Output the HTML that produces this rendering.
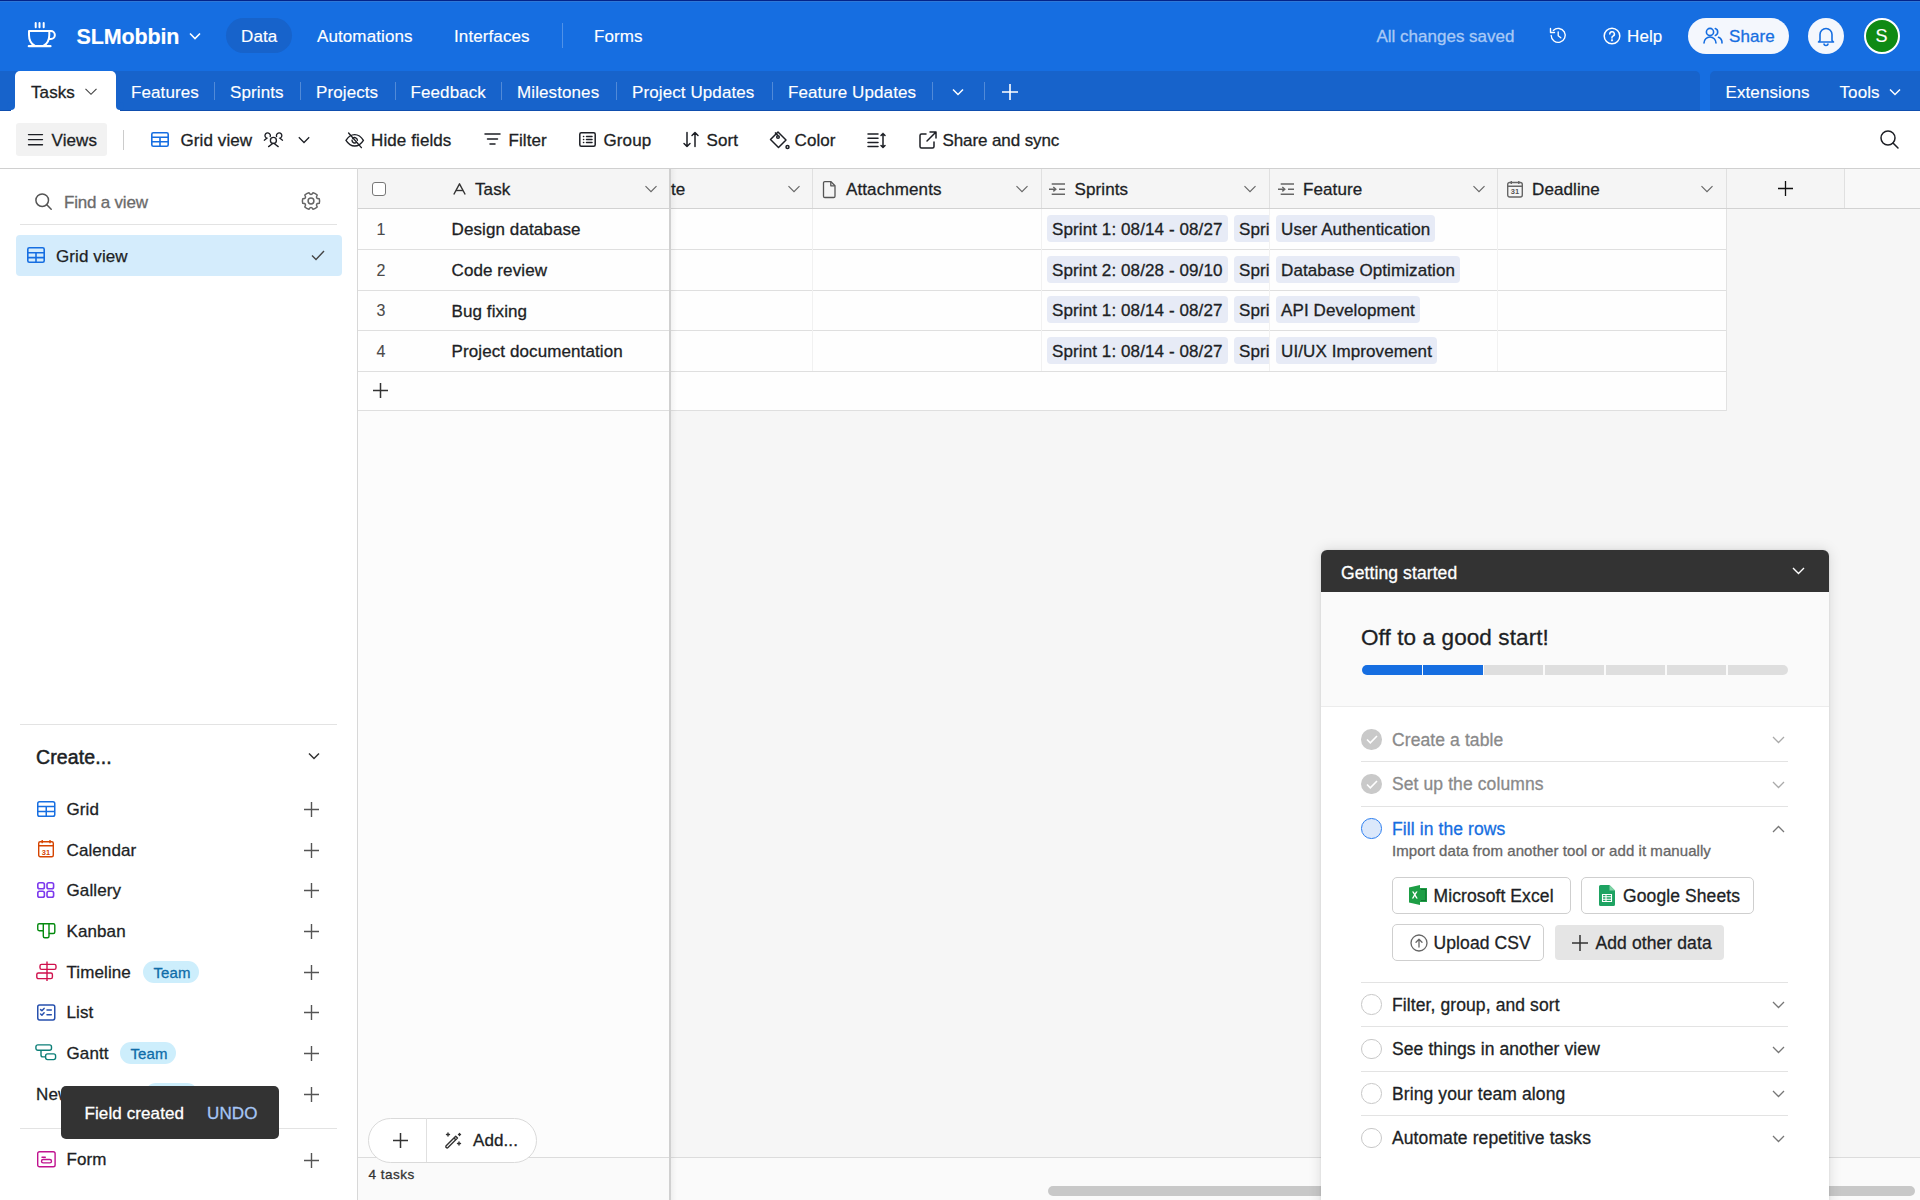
<!DOCTYPE html>
<html><head><meta charset="utf-8">
<style>
*{box-sizing:border-box;margin:0;padding:0}
html,body{width:1920px;height:1200px;overflow:hidden;background:#fff;font-family:"Liberation Sans",sans-serif;color:#1d1f25}
.a{position:absolute}
.t{position:absolute;white-space:nowrap;line-height:1;letter-spacing:.1px;-webkit-text-stroke:.3px currentColor}
svg{position:absolute;overflow:visible}
#top{left:0;top:0;width:1920px;height:111px;background:#166ee1}
#tabs{left:0;top:70.5px;width:1700px;height:40.5px;background:#1763cb;border-top-right-radius:5px;border-bottom:1px solid #0f4eae}
#tabs2{left:1709.5px;top:70.5px;width:210.5px;height:40.5px;background:#1763cb;border-top-left-radius:5px;border-bottom:1px solid #0f4eae}
.w{color:#fff;-webkit-text-stroke:.15px #fff}
.sep{position:absolute;width:1px;background:rgba(255,255,255,.25)}
</style></head><body>
<!-- TOP BAR -->
<div id="top" class="a"></div>
<div class="a" style="left:0;top:0;width:1920px;height:1px;background:#03248a"></div><div class="a" style="left:0;top:1px;width:1920px;height:1px;background:#2f78d6"></div>
<!-- logo cup -->
<svg style="left:26px;top:20px" width="32" height="30" viewBox="0 0 32 30" fill="none" stroke="#fff" stroke-width="2" stroke-linecap="round" stroke-linejoin="round">
 <path d="M9.7 3v4.2M13.5 3v4.2M17.7 3v4.2"/>
 <path d="M3 10.9H24.5M3 10.9V15C3 20.5 5.5 24.2 9 26M23.3 10.9V15C23.3 20.5 20.8 24.2 17.3 26"/>
 <path d="M23.5 10.9h1.3a4.05 4.05 0 0 1 0 8.1h-1.6"/>
 <path d="M2.8 26.2H24.5" stroke-width="2.2"/>
</svg>
<div class="t w" style="left:76.5px;top:26.5px;font-size:21.5px;font-weight:bold;letter-spacing:-.15px">SLMobbin</div>
<svg style="left:189px;top:32px" width="12" height="8" viewBox="0 0 12 8" fill="none" stroke="#fff" stroke-width="1.6"><path d="M1 1.5l5 5 5-5"/></svg>
<div class="a" style="left:225.5px;top:18px;width:66px;height:35px;border-radius:18px;background:#1763cb"></div>
<div class="t w" style="left:241px;top:27.5px;font-size:17px">Data</div>
<div class="t w" style="left:317px;top:27.5px;font-size:17px">Automations</div>
<div class="t w" style="left:454px;top:27.5px;font-size:17px">Interfaces</div>
<div class="sep" style="left:562px;top:23px;height:25px"></div>
<div class="t w" style="left:594px;top:27.5px;font-size:17px">Forms</div>
<div class="t" style="left:1376.5px;top:27.5px;font-size:17px;color:#a9c9f6;letter-spacing:0">All changes saved</div>


<!-- right of top bar -->
<svg style="left:1549px;top:27px" width="18" height="17" viewBox="0 0 18 17" fill="none" stroke="#fff" stroke-width="1.35" stroke-linecap="round" stroke-linejoin="round">
 <path d="M2.2 8.5A7 7 0 1 0 4.3 3.4"/><path d="M1.5 1.5v4h4"/><path d="M9.2 4.8v4l2.6 2"/>
</svg>
<svg style="left:1602.5px;top:27px" width="18" height="18" viewBox="0 0 18 18" fill="none" stroke="#fff" stroke-width="1.5" stroke-linecap="round">
 <circle cx="9" cy="9" r="7.8"/><path d="M6.8 7a2.3 2.3 0 1 1 3.2 2.1c-.7.3-1 .8-1 1.5v.4"/><circle cx="9" cy="13.3" r=".4" fill="#fff"/>
</svg>
<div class="t w" style="left:1627px;top:27.5px;font-size:17px">Help</div>
<div class="a" style="left:1687.5px;top:18px;width:101px;height:35.5px;border-radius:18px;background:#f4f7fd"></div>
<svg style="left:1703px;top:27px" width="20" height="17" viewBox="0 0 20 17" fill="none" stroke="#166ee1" stroke-width="1.6" stroke-linecap="round">
 <circle cx="7" cy="5" r="3.6"/><path d="M1 16a6 6 0 0 1 12 0"/><path d="M12.3 1.6a3.6 3.6 0 0 1 0 6.8"/><path d="M15.5 10.3A6 6 0 0 1 19 16"/>
</svg>
<div class="t" style="left:1729px;top:27.5px;font-size:17px;color:#166ee1">Share</div>
<div class="a" style="left:1808px;top:18px;width:36px;height:36px;border-radius:50%;background:#f4f7fd"></div>
<svg style="left:1817px;top:26px" width="18" height="20" viewBox="0 0 18 20" fill="none" stroke="#166ee1" stroke-width="1.6" stroke-linejoin="round">
 <path d="M3 14.5V8.5a6 6 0 0 1 12 0v6l1.5 1.5h-15z"/><path d="M7 17.5a2 2 0 0 0 4 0"/>
</svg>
<div class="a" style="left:1864px;top:17.5px;width:36px;height:36px;border-radius:50%;background:#0f8a14;border:2px solid #fff"></div>
<div class="t w" style="left:1875.5px;top:27px;font-size:18px">S</div>

<!-- TAB BAR -->
<div id="tabs" class="a"></div>
<div id="tabs2" class="a"></div>
<div class="a" style="left:11px;top:106px;width:5px;height:5px;background:#fff"></div><div class="a" style="left:7px;top:102px;width:8px;height:8px;border-radius:50%;background:#1763cb"></div><div class="a" style="left:115px;top:106px;width:5px;height:5px;background:#fff"></div><div class="a" style="left:116px;top:102px;width:8px;height:8px;border-radius:50%;background:#1763cb"></div>
<div class="a" style="left:15px;top:71px;width:101px;height:41px;background:#fff;border-radius:5px 5px 0 0"></div>
<div class="t" style="left:31px;top:83.5px;font-size:17px;color:#1d1f25">Tasks</div>
<svg style="left:84.5px;top:88px" width="12" height="7" viewBox="0 0 12 7" fill="none" stroke="#444" stroke-width="1.15"><path d="M.5 .8l5.5 5.5 5.5-5.5"/></svg>
<div class="t w" style="left:131px;top:83.5px;font-size:17px">Features</div>
<div class="sep" style="left:213.5px;top:82px;height:18px"></div>
<div class="t w" style="left:230px;top:83.5px;font-size:17px">Sprints</div>
<div class="sep" style="left:299.5px;top:82px;height:18px"></div>
<div class="t w" style="left:316px;top:83.5px;font-size:17px">Projects</div>
<div class="sep" style="left:394.5px;top:82px;height:18px"></div>
<div class="t w" style="left:410.5px;top:83.5px;font-size:17px">Feedback</div>
<div class="sep" style="left:501px;top:82px;height:18px"></div>
<div class="t w" style="left:517px;top:83.5px;font-size:17px">Milestones</div>
<div class="sep" style="left:616px;top:82px;height:18px"></div>
<div class="t w" style="left:632px;top:83.5px;font-size:17px">Project Updates</div>
<div class="sep" style="left:771.5px;top:82px;height:18px"></div>
<div class="t w" style="left:788px;top:83.5px;font-size:17px">Feature Updates</div>
<div class="sep" style="left:932px;top:82px;height:18px"></div>
<svg style="left:951.5px;top:88px" width="12" height="8" viewBox="0 0 12 8" fill="none" stroke="#fff" stroke-width="1.5"><path d="M1 1.5l5 5 5-5"/></svg>
<div class="sep" style="left:983.5px;top:82px;height:18px"></div>
<svg style="left:1001.5px;top:83.5px" width="16" height="16" viewBox="0 0 16 16" fill="none" stroke="#fff" stroke-width="1.6"><path d="M8 0v16M0 8h16"/></svg>
<div class="t w" style="left:1725.5px;top:83.5px;font-size:17px">Extensions</div>
<div class="t w" style="left:1839.5px;top:83.5px;font-size:17px">Tools</div>
<svg style="left:1889px;top:88px" width="12" height="8" viewBox="0 0 12 8" fill="none" stroke="#fff" stroke-width="1.5"><path d="M1 1.5l5 5 5-5"/></svg>

<!-- TOOLBAR -->
<div class="a" style="left:16px;top:123px;width:91px;height:33px;border-radius:3px;background:#f2f2f2"></div>
<svg style="left:28px;top:133px" width="15" height="13" viewBox="0 0 15 13" fill="none" stroke="#1d1f25" stroke-width="1.35" stroke-linecap="round"><path d="M.5 1.6h14M.5 6.6h14M.5 11.75h14"/></svg>
<div class="t" style="left:51.5px;top:131.5px;font-size:17px">Views</div>
<div class="a" style="left:123px;top:130px;width:1px;height:20px;background:#ccc"></div>
<svg style="left:150.5px;top:132px" width="18" height="15" viewBox="0 0 18 15" fill="none" stroke="#166ee1" stroke-width="1.6"><rect x=".8" y=".8" width="16.4" height="13.4" rx="1.5"/><path d="M1 5.3h16M1 9.8h16M9 5.3v9"/></svg>
<div class="t" style="left:180.5px;top:131.5px;font-size:17px">Grid view</div>
<svg style="left:263px;top:131px" width="22" height="18" viewBox="0 0 22 18" fill="none" stroke="#1d1f25" stroke-width="1.35" stroke-linecap="round"><circle cx="10.4" cy="9.4" r="3"/><path d="M5.6 15.6L9 13a2.2 2.2 0 0 1 2.8 0l3.4 2.6"/><path d="M7.2 5.6A2.7 2.7 0 1 0 3.8 7.2L1.3 9.2"/><path d="M13.6 5.6A2.7 2.7 0 1 1 17 7.2l2.5 2"/></svg>
<svg style="left:298px;top:136px" width="12" height="8" viewBox="0 0 12 8" fill="none" stroke="#1d1f25" stroke-width="1.25"><path d="M.8 1.3l5.2 5.2 5.2-5.2"/></svg>
<svg style="left:345px;top:131.5px" width="20" height="17" viewBox="0 0 20 17" fill="none" stroke="#1d1f25" stroke-width="1.4" stroke-linecap="round"><path d="M1 8.3C3.5 4.3 6.5 2.6 9.7 2.6s6.2 1.7 8.7 5.7c-2.5 4-5.5 5.7-8.7 5.7S3.5 12.3 1 8.3z"/><path d="M12.4 8.3a2.7 2.7 0 0 0-4.6-1.9M7 8.3a2.7 2.7 0 0 0 4.6 1.9"/><path d="M3.6 1l12.8 14.6"/></svg>
<div class="t" style="left:371px;top:131.5px;font-size:17px">Hide fields</div>
<svg style="left:484px;top:132px" width="17" height="15" viewBox="0 0 17 15" fill="none" stroke="#1d1f25" stroke-width="1.5" stroke-linecap="round"><path d="M1 2h15M3.5 7h10M6 12h5"/></svg>
<div class="t" style="left:508.5px;top:131.5px;font-size:17px">Filter</div>
<svg style="left:579px;top:132px" width="17" height="15" viewBox="0 0 17 15" fill="none" stroke="#1d1f25" stroke-width="1.5" stroke-linecap="round"><rect x=".8" y=".8" width="15.4" height="13.4" rx="1.5"/><path d="M4.5 4.5h.2M4.5 7.5h.2M4.5 10.5h.2M7.5 4.5h5.5M7.5 7.5h5.5M7.5 10.5h5.5"/></svg>
<div class="t" style="left:603.5px;top:131.5px;font-size:17px">Group</div>
<svg style="left:683px;top:131px" width="16" height="17" viewBox="0 0 16 17" fill="none" stroke="#1d1f25" stroke-width="1.5" stroke-linecap="round" stroke-linejoin="round"><path d="M4 1.5v14M1 12.5l3 3 3-3M12 15.5v-14M9 4.5l3-3 3 3"/></svg>
<div class="t" style="left:706.5px;top:131.5px;font-size:17px">Sort</div>
<svg style="left:769px;top:130.5px" width="21" height="19" viewBox="0 0 21 19" fill="none" stroke="#1d1f25" stroke-width="1.5" stroke-linejoin="round"><path d="M1.5 8.5L9 1l8 8-7.5 7.5z"/><path d="M6 1.5l3 3"/><circle cx="9" cy="6" r="1.3"/><circle cx="18.5" cy="16" r="1.5"/></svg>
<div class="t" style="left:794.5px;top:131.5px;font-size:17px">Color</div>
<svg style="left:867px;top:131.5px" width="19" height="17" viewBox="0 0 19 17" fill="none" stroke="#1d1f25" stroke-width="1.5" stroke-linecap="round"><path d="M1 2h10M1 6.2h10M1 10.4h10M1 14.6h10"/><path d="M16 1.5v14M14 3.5l2-2 2 2M14 13.5l2 2 2-2"/></svg>
<svg style="left:918.5px;top:131px" width="18" height="18" viewBox="0 0 18 18" fill="none" stroke="#1d1f25" stroke-width="1.5" stroke-linecap="round" stroke-linejoin="round"><path d="M7 3H2.5A1.5 1.5 0 0 0 1 4.5v11A1.5 1.5 0 0 0 2.5 17h11a1.5 1.5 0 0 0 1.5-1.5V11"/><path d="M11 1h6v6M17 1L8 10"/></svg>
<div class="t" style="left:942.5px;top:131.5px;font-size:17px;letter-spacing:-.1px">Share and sync</div>
<svg style="left:1880px;top:130px" width="19" height="19" viewBox="0 0 19 19" fill="none" stroke="#1d1f25" stroke-width="1.5" stroke-linecap="round"><circle cx="8" cy="8" r="7"/><path d="M13 13l5 5"/></svg>



<!-- GRID -->
<div class="a" style="left:358px;top:168px;width:1562px;height:1032px;background:#f6f6f6"></div>
<div class="a" style="left:358px;top:168px;width:312px;height:990px;background:#fcfcfc"></div>
<div class="a" style="left:0;top:168px;width:1920px;height:1px;background:#d0d0d0"></div>
<div class="a" style="left:358px;top:169px;width:1486px;height:39px;background:#f5f5f5"></div>
<div class="a" style="left:1844px;top:169px;width:76px;height:39px;background:#f8f8f8"></div>
<div class="a" style="left:358px;top:208px;width:1562px;height:1px;background:#d2d2d2"></div>
<div class="a" style="left:358px;top:209px;width:1368px;height:201px;background:#fefefe"></div>
<div class="a" style="left:358px;top:249px;width:1368px;height:1px;background:#dfdfdf"></div>
<div class="a" style="left:358px;top:290px;width:1368px;height:1px;background:#dfdfdf"></div>
<div class="a" style="left:358px;top:330px;width:1368px;height:1px;background:#dfdfdf"></div>
<div class="a" style="left:358px;top:371px;width:1368px;height:1px;background:#dfdfdf"></div>
<div class="a" style="left:358px;top:410px;width:1368px;height:1px;background:#dfdfdf"></div>
<div class="a" style="left:812px;top:169px;width:1px;height:39px;background:#e0e0e0"></div>
<div class="a" style="left:1041px;top:169px;width:1px;height:39px;background:#e0e0e0"></div>
<div class="a" style="left:1269px;top:169px;width:1px;height:39px;background:#e0e0e0"></div>
<div class="a" style="left:1497px;top:169px;width:1px;height:39px;background:#e0e0e0"></div>
<div class="a" style="left:1726px;top:169px;width:1px;height:39px;background:#e0e0e0"></div>
<div class="a" style="left:1844px;top:169px;width:1px;height:39px;background:#e0e0e0"></div>
<div class="a" style="left:812px;top:209px;width:1px;height:162px;background:#f1f1f1"></div>
<div class="a" style="left:1041px;top:209px;width:1px;height:162px;background:#f1f1f1"></div>
<div class="a" style="left:1269px;top:209px;width:1px;height:162px;background:#f1f1f1"></div>
<div class="a" style="left:1497px;top:209px;width:1px;height:162px;background:#f1f1f1"></div>
<div class="a" style="left:1726px;top:209px;width:1px;height:202px;background:#e2e2e2"></div>
<div class="a" style="left:669px;top:169px;width:2px;height:1031px;background:#d0d0d0"></div>
<div class="a" style="left:671px;top:169px;width:6px;height:1031px;background:linear-gradient(90deg,rgba(0,0,0,.045),rgba(0,0,0,0))"></div>
<div class="a" style="left:372px;top:182px;width:14px;height:14px;border:1.5px solid #777;border-radius:3px;background:#fff"></div>
<svg style="left:453px;top:183px" width="13" height="12" viewBox="0 0 13 12" fill="none" stroke="#333" stroke-width="1.4" stroke-linejoin="round"><path d="M.8 11.5L6.5 .8l5.7 10.7"/><path d="M3 7.5h7"/></svg>
<div class="t" style="left:475px;top:180.5px;font-size:17px">Task</div>
<svg style="left:645px;top:185px" width="12" height="8" viewBox="0 0 12 8" fill="none" stroke="#666" stroke-width="1.15"><path d="M.5 1.2l5.5 5.5 5.5-5.5"/></svg>
<div class="t" style="left:671px;top:180.5px;font-size:17px">te</div>
<svg style="left:787.5px;top:185px" width="12" height="8" viewBox="0 0 12 8" fill="none" stroke="#666" stroke-width="1.15"><path d="M.5 1.2l5.5 5.5 5.5-5.5"/></svg>
<svg style="left:822px;top:181px" width="14" height="17" viewBox="0 0 14 17" fill="none" stroke="#555" stroke-width="1.3" stroke-linejoin="round"><path d="M1.5 2A1.3 1.3 0 0 1 2.8.7H9l4 4v10.5a1.3 1.3 0 0 1-1.3 1.3H2.8a1.3 1.3 0 0 1-1.3-1.3z"/><path d="M8.8 .8v4h4"/></svg>
<div class="t" style="left:846px;top:180.5px;font-size:17px">Attachments</div>
<svg style="left:1016px;top:185px" width="12" height="8" viewBox="0 0 12 8" fill="none" stroke="#666" stroke-width="1.15"><path d="M.5 1.2l5.5 5.5 5.5-5.5"/></svg>
<svg style="left:1049px;top:182px" width="17" height="14" viewBox="0 0 17 14" fill="none" stroke="#666" stroke-width="1.5"><path d="M2.7 2.1H16M10 7.2h6M2.7 12.2H16M0 7.2h6"/><path d="M4.3 5l2.5 2.2-2.5 2.2" stroke-width="1.4"/></svg>
<div class="t" style="left:1074.5px;top:180.5px;font-size:17px">Sprints</div>
<svg style="left:1244px;top:185px" width="12" height="8" viewBox="0 0 12 8" fill="none" stroke="#666" stroke-width="1.15"><path d="M.5 1.2l5.5 5.5 5.5-5.5"/></svg>
<svg style="left:1277.5px;top:182px" width="17" height="14" viewBox="0 0 17 14" fill="none" stroke="#666" stroke-width="1.5"><path d="M2.7 2.1H16M10 7.2h6M2.7 12.2H16M0 7.2h6"/><path d="M4.3 5l2.5 2.2-2.5 2.2" stroke-width="1.4"/></svg>
<div class="t" style="left:1303px;top:180.5px;font-size:17px">Feature</div>
<svg style="left:1472.5px;top:185px" width="12" height="8" viewBox="0 0 12 8" fill="none" stroke="#666" stroke-width="1.15"><path d="M.5 1.2l5.5 5.5 5.5-5.5"/></svg>
<svg style="left:1507px;top:181px" width="16" height="16" viewBox="0 0 16 16" fill="none" stroke="#666" stroke-width="1.4"><rect x=".7" y="1.5" width="14.6" height="14.5" rx="2"/><path d="M.7 5.3h14.6M4.3 0v3M11.8 0v3"/><text x="8" y="13.2" font-size="7.5" font-family="Liberation Sans" font-weight="bold" fill="#555" stroke="none" text-anchor="middle">31</text></svg>
<div class="t" style="left:1532px;top:180.5px;font-size:17px">Deadline</div>
<svg style="left:1701px;top:185px" width="12" height="8" viewBox="0 0 12 8" fill="none" stroke="#666" stroke-width="1.15"><path d="M.5 1.2l5.5 5.5 5.5-5.5"/></svg>
<svg style="left:1778px;top:181px" width="15" height="15" viewBox="0 0 15 15" fill="none" stroke="#111" stroke-width="1.3"><path d="M7.5 0v15M0 7.5h15"/></svg>
<!--ROWS-->
<div class="t" style="left:376.5px;top:222.1px;font-size:16px;color:#4a4a4a;-webkit-text-stroke:.1px #4a4a4a">1</div>
<div class="t" style="left:451.5px;top:221.4px;font-size:17px">Design database</div>
<div class="a" style="left:1042px;top:215.0px;width:227px;height:28px;overflow:hidden"><div class="a" style="left:4.5px;top:0;width:181.0px;height:27px;border-radius:4px;background:#e7ebf6"></div><div class="t" style="left:10px;top:6px;font-size:17px;letter-spacing:0.1px">Sprint 1: 08/14 - 08/27</div><div class="a" style="left:191.5px;top:0;width:80px;height:27px;border-radius:4px;background:#e7ebf6"></div><div class="t" style="left:197.0px;top:6px;font-size:17px;letter-spacing:0.1px">Sprint</div></div>
<div class="a" style="left:1275.5px;top:215.0px;width:159.8px;height:27px;border-radius:4px;background:#e7ebf6"></div>
<div class="t" style="left:1281px;top:221.0px;font-size:17px;letter-spacing:0.1px">User Authentication</div>
<div class="t" style="left:376.5px;top:262.7px;font-size:16px;color:#4a4a4a;-webkit-text-stroke:.1px #4a4a4a">2</div>
<div class="t" style="left:451.5px;top:262.0px;font-size:17px">Code review</div>
<div class="a" style="left:1042px;top:255.6px;width:227px;height:28px;overflow:hidden"><div class="a" style="left:4.5px;top:0;width:181.0px;height:27px;border-radius:4px;background:#e7ebf6"></div><div class="t" style="left:10px;top:6px;font-size:17px;letter-spacing:0.1px">Sprint 2: 08/28 - 09/10</div><div class="a" style="left:191.5px;top:0;width:80px;height:27px;border-radius:4px;background:#e7ebf6"></div><div class="t" style="left:197.0px;top:6px;font-size:17px;letter-spacing:0.1px">Sprint</div></div>
<div class="a" style="left:1275.5px;top:255.6px;width:184.6px;height:27px;border-radius:4px;background:#e7ebf6"></div>
<div class="t" style="left:1281px;top:261.6px;font-size:17px;letter-spacing:0.1px">Database Optimization</div>
<div class="t" style="left:376.5px;top:303.3px;font-size:16px;color:#4a4a4a;-webkit-text-stroke:.1px #4a4a4a">3</div>
<div class="t" style="left:451.5px;top:302.6px;font-size:17px">Bug fixing</div>
<div class="a" style="left:1042px;top:296.2px;width:227px;height:28px;overflow:hidden"><div class="a" style="left:4.5px;top:0;width:181.0px;height:27px;border-radius:4px;background:#e7ebf6"></div><div class="t" style="left:10px;top:6px;font-size:17px;letter-spacing:0.1px">Sprint 1: 08/14 - 08/27</div><div class="a" style="left:191.5px;top:0;width:80px;height:27px;border-radius:4px;background:#e7ebf6"></div><div class="t" style="left:197.0px;top:6px;font-size:17px;letter-spacing:0.1px">Sprint</div></div>
<div class="a" style="left:1275.5px;top:296.2px;width:144.3px;height:27px;border-radius:4px;background:#e7ebf6"></div>
<div class="t" style="left:1281px;top:302.2px;font-size:17px;letter-spacing:0.1px">API Development</div>
<div class="t" style="left:376.5px;top:343.9px;font-size:16px;color:#4a4a4a;-webkit-text-stroke:.1px #4a4a4a">4</div>
<div class="t" style="left:451.5px;top:343.2px;font-size:17px">Project documentation</div>
<div class="a" style="left:1042px;top:336.8px;width:227px;height:28px;overflow:hidden"><div class="a" style="left:4.5px;top:0;width:181.0px;height:27px;border-radius:4px;background:#e7ebf6"></div><div class="t" style="left:10px;top:6px;font-size:17px;letter-spacing:0.1px">Sprint 1: 08/14 - 08/27</div><div class="a" style="left:191.5px;top:0;width:80px;height:27px;border-radius:4px;background:#e7ebf6"></div><div class="t" style="left:197.0px;top:6px;font-size:17px;letter-spacing:0.1px">Sprint</div></div>
<div class="a" style="left:1275.5px;top:336.8px;width:161.4px;height:27px;border-radius:4px;background:#e7ebf6"></div>
<div class="t" style="left:1281px;top:342.8px;font-size:17px;letter-spacing:0.1px">UI/UX Improvement</div>
<!--/ROWS-->
<svg style="left:372.5px;top:383px" width="15" height="15" viewBox="0 0 15 15" fill="none" stroke="#333" stroke-width="1.5"><path d="M7.5 0v15M0 7.5h15"/></svg>
<!-- footer -->
<div class="a" style="left:358px;top:1158px;width:1562px;height:42px;background:#fafafa"></div><div class="a" style="left:358px;top:1157px;width:1562px;height:1px;background:#dcdcdc"></div><div class="a" style="left:669px;top:1157px;width:2px;height:43px;background:#d0d0d0"></div><div class="a" style="left:671px;top:1157px;width:6px;height:43px;background:linear-gradient(90deg,rgba(0,0,0,.045),rgba(0,0,0,0))"></div>
<div class="a" style="left:368px;top:1117.5px;width:169px;height:45px;border-radius:23px;background:#fff;border:1px solid #dadada"></div>
<div class="a" style="left:426px;top:1118px;width:1px;height:44px;background:#e0e0e0"></div>
<svg style="left:392.5px;top:1132.5px" width="15" height="15" viewBox="0 0 15 15" fill="none" stroke="#333" stroke-width="1.5"><path d="M7.5 0v15M0 7.5h15"/></svg>
<svg style="left:443.5px;top:1131.5px" width="18" height="17" viewBox="0 0 18 17" fill="none" stroke="#333" stroke-width="1.4" stroke-linejoin="round"><path d="M2.2 13.8l9.5-9.5 1.8 1.8L4 15.6a1.2 1.2 0 0 1-1.7 0l-.1-.1a1.2 1.2 0 0 1 0-1.7z"/><path d="M10 6l1.8 1.8"/><path d="M4 1v3M2.5 2.5h3M15 10v3M13.5 11.5h3M15.5 1.5v2M14.5 2.5h2" stroke-linecap="round"/></svg>
<div class="t" style="left:473px;top:1131.5px;font-size:17px">Add...</div>
<div class="t" style="left:368.5px;top:1167.5px;font-size:13.5px;letter-spacing:.5px;color:#333">4 tasks</div>
<div class="a" style="left:1048px;top:1186px;width:867px;height:10px;border-radius:5px;background:#c8c8c8"></div>

<!-- SIDEBAR -->
<div class="a" style="left:357px;top:168px;width:1px;height:1032px;background:#d8d8d8"></div>
<svg style="left:34.5px;top:193px" width="17" height="17" viewBox="0 0 17 17" fill="none" stroke="#555" stroke-width="1.5" stroke-linecap="round"><circle cx="7.2" cy="7.2" r="6.3"/><path d="M11.8 11.8l4.4 4.4"/></svg>
<div class="t" style="left:64px;top:193.5px;font-size:17px;color:#6b6b6b;letter-spacing:-.2px">Find a view</div>
<svg style="left:301px;top:191.2px" width="20" height="20" viewBox="0 0 20 20" fill="none" stroke="#666" stroke-width="1.5" stroke-linejoin="round"><path d="M18.27 7.63A8.6 8.6 0 0 1 18.27 12.37Q13.98 12.30 16.19 15.97A8.6 8.6 0 0 1 12.08 18.34Q10.00 14.60 7.92 18.34A8.6 8.6 0 0 1 3.81 15.97Q6.02 12.30 1.73 12.37A8.6 8.6 0 0 1 1.73 7.63Q6.02 7.70 3.81 4.03A8.6 8.6 0 0 1 7.92 1.66Q10.00 5.40 12.08 1.66A8.6 8.6 0 0 1 16.19 4.03Q13.98 7.70 18.27 7.63Z"/><circle cx="10" cy="10" r="2.9"/></svg>
<div class="a" style="left:20px;top:223.5px;width:317px;height:1px;background:#e3e3e3"></div>
<div class="a" style="left:15.5px;top:235px;width:326px;height:40.5px;border-radius:4px;background:#d4ecfc"></div>
<svg style="left:26.5px;top:247px" width="18" height="16" viewBox="0 0 18 16" fill="none" stroke="#166ee1" stroke-width="1.6"><rect x=".8" y=".8" width="16.4" height="14.4" rx="1.5"/><path d="M1 5.8h16M1 10.6h16M9 5.8v9.5"/></svg>
<div class="t" style="left:56px;top:247.5px;font-size:17px;color:#1d1f25;-webkit-text-stroke:.25px #1d1f25">Grid view</div>
<svg style="left:310.5px;top:250px" width="14" height="11" viewBox="0 0 14 11" fill="none" stroke="#444" stroke-width="1.4"><path d="M1 5.5l4 4L13 1"/></svg>

<div class="a" style="left:20px;top:723.5px;width:317px;height:1px;background:#e3e3e3"></div>
<div class="t" style="left:36px;top:748px;font-size:19.5px;color:#1d1f25;-webkit-text-stroke:.5px #1d1f25">Create...</div>
<svg style="left:307.5px;top:752px" width="12" height="8" viewBox="0 0 12 8" fill="none" stroke="#333" stroke-width="1.5"><path d="M1 1.5l5 5 5-5"/></svg>
<!--CREATE-->
<svg style="left:36.5px;top:801px" width="19" height="16" viewBox="0 0 19 16" fill="none"><g stroke="#166ee1" stroke-width="1.5"><rect x=".75" y=".75" width="17" height="14.5" rx="1.8"/><path d="M1 5.6h16.5M1 10.4h16.5M9.25 5.6v9.6"/></g></svg>
<div class="t" style="left:66.5px;top:800.5px;font-size:17px">Grid</div>
<svg style="left:303.5px;top:801.5px" width="15" height="15" viewBox="0 0 15 15" fill="none" stroke="#555" stroke-width="1.4"><path d="M7.5 0v15M0 7.5h15"/></svg>
<svg style="left:37.5px;top:840px" width="16" height="17.5" viewBox="0 0 16 17.5" fill="none"><g stroke="#d54401" stroke-width="1.4"><rect x=".7" y="1.7" width="14.6" height="15.1" rx="1.5"/><path d="M.7 5.8h14.6M4.2 0v3.2M12 0v3.2"/></g><text x="8" y="14.6" font-size="7.5" font-family="Liberation Sans" font-weight="bold" fill="#d54401" text-anchor="middle">31</text></svg>
<div class="t" style="left:66.5px;top:841.5px;font-size:17px">Calendar</div>
<svg style="left:303.5px;top:842.5px" width="15" height="15" viewBox="0 0 15 15" fill="none" stroke="#555" stroke-width="1.4"><path d="M7.5 0v15M0 7.5h15"/></svg>
<svg style="left:37px;top:882px" width="17.5" height="16" viewBox="0 0 17.5 16" fill="none"><g stroke="#7c39ed" stroke-width="1.6"><rect x=".8" y=".8" width="6.6" height="6" rx="1.8"/><rect x="10" y=".8" width="6.6" height="6" rx="1.8"/><rect x=".8" y="9.2" width="6.6" height="6" rx="1.8"/><rect x="10" y="9.2" width="6.6" height="6" rx="1.8"/></g></svg>
<div class="t" style="left:66.5px;top:882.0px;font-size:17px">Gallery</div>
<svg style="left:303.5px;top:883.0px" width="15" height="15" viewBox="0 0 15 15" fill="none" stroke="#555" stroke-width="1.4"><path d="M7.5 0v15M0 7.5h15"/></svg>
<svg style="left:36.5px;top:922.5px" width="19" height="16" viewBox="0 0 19 16" fill="none"><g stroke="#048a0e" stroke-width="1.4" stroke-linejoin="round"><path d="M2.2 .75H16.3a1.5 1.5 0 0 1 1.5 1.5V9a1.5 1.5 0 0 1-1.5 1.5H12v2.8a1.5 1.5 0 0 1-1.5 1.5H7.8a1.5 1.5 0 0 1-1.5-1.5V7.8H2.2A1.5 1.5 0 0 1 .75 6.3V2.25A1.5 1.5 0 0 1 2.2.75z"/><path d="M6.3 1v6.8M12 1v9.5"/></g></svg>
<div class="t" style="left:66.5px;top:922.5px;font-size:17px">Kanban</div>
<svg style="left:303.5px;top:923.5px" width="15" height="15" viewBox="0 0 15 15" fill="none" stroke="#555" stroke-width="1.4"><path d="M7.5 0v15M0 7.5h15"/></svg>
<svg style="left:35.5px;top:961px" width="21" height="21" viewBox="0 0 21 21" fill="none"><g stroke="#d0114d" stroke-width="1.4"><path d="M11 .5v19.5"/><rect x="4" y="3.4" width="16" height="5" rx="1.6"/><rect x=".8" y="12" width="15.6" height="5.6" rx="1.6"/></g></svg>
<div class="t" style="left:66.5px;top:963.5px;font-size:17px">Timeline</div>
<div class="a" style="left:143px;top:961.0px;width:56px;height:22px;border-radius:11px;background:#cdeefc"></div>
<div class="t" style="left:153.5px;top:964.5px;font-size:15px;color:#0f6ca8">Team</div>
<svg style="left:303.5px;top:964.5px" width="15" height="15" viewBox="0 0 15 15" fill="none" stroke="#555" stroke-width="1.4"><path d="M7.5 0v15M0 7.5h15"/></svg>
<svg style="left:36.5px;top:1003.5px" width="19" height="17" viewBox="0 0 19 17" fill="none"><g stroke="#2750ae" stroke-width="1.5" stroke-linecap="round" stroke-linejoin="round"><rect x=".75" y=".9" width="17" height="15" rx="1.8"/><path d="M3.6 5.6l1.3 1.2 2.2-2.4M3.6 10l1.3 1.2 2.2-2.4M10 5.9h4.3M10 10.7h4.3"/></g></svg>
<div class="t" style="left:66.5px;top:1003.5px;font-size:17px">List</div>
<svg style="left:303.5px;top:1004.5px" width="15" height="15" viewBox="0 0 15 15" fill="none" stroke="#555" stroke-width="1.4"><path d="M7.5 0v15M0 7.5h15"/></svg>
<svg style="left:35px;top:1044px" width="21.5" height="17" viewBox="0 0 21.5 17" fill="none"><g stroke="#0d7f78" stroke-width="1.4"><rect x=".9" y=".9" width="15.6" height="5.4" rx="2"/><path d="M6 6.3v4.6a2 2 0 0 0 2 2h2.4"/><rect x="10.6" y="9.9" width="10" height="5.7" rx="2"/></g></svg>
<div class="t" style="left:66.5px;top:1044.5px;font-size:17px">Gantt</div>
<div class="a" style="left:120px;top:1042.0px;width:56px;height:22px;border-radius:11px;background:#cdeefc"></div>
<div class="t" style="left:130.5px;top:1045.5px;font-size:15px;color:#0f6ca8">Team</div>
<svg style="left:303.5px;top:1045.5px" width="15" height="15" viewBox="0 0 15 15" fill="none" stroke="#555" stroke-width="1.4"><path d="M7.5 0v15M0 7.5h15"/></svg>
<div class="t" style="left:36px;top:1085.5px;font-size:17px">New section</div>
<div class="a" style="left:145px;top:1083px;width:53px;height:22px;border-radius:11px;background:#cdeefc"></div>
<svg style="left:303.5px;top:1086.5px" width="15" height="15" viewBox="0 0 15 15" fill="none" stroke="#555" stroke-width="1.4"><path d="M7.5 0v15M0 7.5h15"/></svg>
<div class="a" style="left:20px;top:1128px;width:317px;height:1px;background:#e3e3e3"></div>
<svg style="left:36.5px;top:1151px" width="19" height="17" viewBox="0 0 19 17" fill="none"><g stroke="#c0128f" stroke-width="1.4"><rect x=".7" y=".7" width="17.4" height="15" rx="1.8"/><path d="M5 6.3h3.3" stroke-linecap="round"/><rect x="4.5" y="8.5" width="10" height="3.4" rx="1.7"/></g></svg>
<div class="t" style="left:66.5px;top:1151px;font-size:17px">Form</div>
<svg style="left:303.5px;top:1152.5px" width="15" height="15" viewBox="0 0 15 15" fill="none" stroke="#555" stroke-width="1.4"><path d="M7.5 0v15M0 7.5h15"/></svg>
<!--/CREATE-->
<!-- toast -->
<div class="a" style="left:61px;top:1086px;width:217.5px;height:52.5px;border-radius:5px;background:#333"></div>
<div class="t" style="left:84.5px;top:1104.5px;font-size:17px;color:#fff">Field created</div>
<div class="t" style="left:207px;top:1104.5px;font-size:17px;color:#a6c6f5">UNDO</div>


<!-- GETTING STARTED PANEL -->
<div class="a" style="left:1320.5px;top:550px;width:508px;height:660px;border-radius:6px 6px 0 0;background:#fff;box-shadow:0 0 14px rgba(0,0,0,.13),0 0 3px rgba(0,0,0,.08)"></div>
<div class="a" style="left:1320.5px;top:550px;width:508px;height:42px;border-radius:6px 6px 0 0;background:#333"></div>
<div class="t" style="left:1341px;top:564.7px;font-size:17.5px;color:#fff">Getting started</div>
<svg style="left:1791.5px;top:567px" width="13" height="8" viewBox="0 0 13 8" fill="none" stroke="#fff" stroke-width="1.4"><path d="M1 1l5.5 5.5L12 1"/></svg>
<div class="a" style="left:1320.5px;top:592px;width:508px;height:114.5px;background:#fafafa"></div>
<div class="a" style="left:1320.5px;top:706px;width:508px;height:1px;background:#ececec"></div>
<div class="t" style="left:1361px;top:626.7px;font-size:22.5px;color:#1d1f25">Off to a good start!</div>
<div class="a" style="left:1361.5px;top:664.5px;width:60.2px;height:10.5px;background:#166ee1;border-radius:5px 0 0 5px;"></div>
<div class="a" style="left:1423.2px;top:664.5px;width:59.4px;height:10.5px;background:#166ee1;"></div>
<div class="a" style="left:1484.1px;top:664.5px;width:59.4px;height:10.5px;background:#dedede;"></div>
<div class="a" style="left:1545.0px;top:664.5px;width:59.4px;height:10.5px;background:#dedede;"></div>
<div class="a" style="left:1606.0px;top:664.5px;width:59.4px;height:10.5px;background:#dedede;"></div>
<div class="a" style="left:1666.9px;top:664.5px;width:59.4px;height:10.5px;background:#dedede;"></div>
<div class="a" style="left:1727.8px;top:664.5px;width:60.2px;height:10.5px;background:#dedede;border-radius:0 5px 5px 0;"></div>
<div class="a" style="left:1361px;top:729.2px;width:20.5px;height:20.5px;border-radius:50%;background:#c9c9c9"></div>
<svg style="left:1365.5px;top:735.0px" width="12" height="9" viewBox="0 0 12 9" fill="none" stroke="#fff" stroke-width="1.6"><path d="M1 4.5l3.3 3.3L11 1"/></svg>
<div class="t" style="left:1392px;top:731.7px;font-size:17.5px;color:#8a8a8a">Create a table</div>
<svg style="left:1771.5px;top:736.0px" width="13" height="8" viewBox="0 0 13 8" fill="none" stroke="#aaa" stroke-width="1.3"><path d="M1 1l5.5 5.5L12 1"/></svg>
<div class="a" style="left:1361px;top:773.8px;width:20.5px;height:20.5px;border-radius:50%;background:#c9c9c9"></div>
<svg style="left:1365.5px;top:779.5px" width="12" height="9" viewBox="0 0 12 9" fill="none" stroke="#fff" stroke-width="1.6"><path d="M1 4.5l3.3 3.3L11 1"/></svg>
<div class="t" style="left:1392px;top:776.2px;font-size:17.5px;color:#8a8a8a">Set up the columns</div>
<svg style="left:1771.5px;top:780.5px" width="13" height="8" viewBox="0 0 13 8" fill="none" stroke="#aaa" stroke-width="1.3"><path d="M1 1l5.5 5.5L12 1"/></svg>
<div class="a" style="left:1361px;top:818.2px;width:20.5px;height:20.5px;border-radius:50%;background:#dbe8fb;border:1.5px solid #2d7ff0"></div>
<div class="t" style="left:1392px;top:820.7px;font-size:17.5px;color:#166ee1">Fill in the rows</div>
<svg style="left:1771.5px;top:824.5px" width="13" height="8" viewBox="0 0 13 8" fill="none" stroke="#777" stroke-width="1.3"><path d="M1 7l5.5-5.5L12 7"/></svg>
<div class="a" style="left:1361px;top:994.2px;width:20.5px;height:20.5px;border-radius:50%;background:#fff;border:1.3px solid #c8c8c8"></div>
<div class="t" style="left:1392px;top:996.7px;font-size:17.5px;color:#1d1f25">Filter, group, and sort</div>
<svg style="left:1771.5px;top:1001.0px" width="13" height="8" viewBox="0 0 13 8" fill="none" stroke="#777" stroke-width="1.3"><path d="M1 1l5.5 5.5L12 1"/></svg>
<div class="a" style="left:1361px;top:1038.8px;width:20.5px;height:20.5px;border-radius:50%;background:#fff;border:1.3px solid #c8c8c8"></div>
<div class="t" style="left:1392px;top:1041.2px;font-size:17.5px;color:#1d1f25">See things in another view</div>
<svg style="left:1771.5px;top:1045.5px" width="13" height="8" viewBox="0 0 13 8" fill="none" stroke="#777" stroke-width="1.3"><path d="M1 1l5.5 5.5L12 1"/></svg>
<div class="a" style="left:1361px;top:1083.2px;width:20.5px;height:20.5px;border-radius:50%;background:#fff;border:1.3px solid #c8c8c8"></div>
<div class="t" style="left:1392px;top:1085.7px;font-size:17.5px;color:#1d1f25">Bring your team along</div>
<svg style="left:1771.5px;top:1090.0px" width="13" height="8" viewBox="0 0 13 8" fill="none" stroke="#777" stroke-width="1.3"><path d="M1 1l5.5 5.5L12 1"/></svg>
<div class="a" style="left:1361px;top:1127.8px;width:20.5px;height:20.5px;border-radius:50%;background:#fff;border:1.3px solid #c8c8c8"></div>
<div class="t" style="left:1392px;top:1130.2px;font-size:17.5px;color:#1d1f25">Automate repetitive tasks</div>
<svg style="left:1771.5px;top:1134.5px" width="13" height="8" viewBox="0 0 13 8" fill="none" stroke="#777" stroke-width="1.3"><path d="M1 1l5.5 5.5L12 1"/></svg>
<div class="a" style="left:1361px;top:761.0px;width:427px;height:1px;background:#e3e3e3"></div>
<div class="a" style="left:1361px;top:805.5px;width:427px;height:1px;background:#e3e3e3"></div>
<div class="a" style="left:1361px;top:982.0px;width:427px;height:1px;background:#e3e3e3"></div>
<div class="a" style="left:1361px;top:1026.0px;width:427px;height:1px;background:#e3e3e3"></div>
<div class="a" style="left:1361px;top:1070.5px;width:427px;height:1px;background:#e3e3e3"></div>
<div class="a" style="left:1361px;top:1115.0px;width:427px;height:1px;background:#e3e3e3"></div>

<div class="t" style="left:1392px;top:843.2px;font-size:15px;letter-spacing:.06px;color:#666">Import data from another tool or add it manually</div>
<div class="a" style="left:1392px;top:876.5px;width:178.5px;height:37px;border-radius:5px;border:1px solid #cfcfcf;background:#fff"></div>
<svg style="left:1408.5px;top:884.5px" width="19" height="20" viewBox="0 0 19 20"><path d="M0 2.5L11 0v20L0 17.5z" fill="#1d9e45"/><path d="M11 3h7v14h-7z" fill="#1d9e45"/><path d="M3 6.5l2 3.3-2.2 3.7h1.6l1.4-2.5 1.4 2.5h1.6L6.6 9.8l2-3.3H7L5.8 8.6 4.6 6.5z" fill="#fff"/><path d="M12 4.5h4.8v11H12" fill="none" stroke="#0e6b2c" stroke-width=".8"/></svg>
<div class="t" style="left:1433.5px;top:887.7px;font-size:17.5px">Microsoft Excel</div>
<div class="a" style="left:1581px;top:876.5px;width:172.5px;height:37px;border-radius:5px;border:1px solid #cfcfcf;background:#fff"></div>
<svg style="left:1598.5px;top:884.5px" width="16" height="21" viewBox="0 0 16 21"><path d="M1.5 0h9L16 5.5v14a1.5 1.5 0 0 1-1.5 1.5h-13A1.5 1.5 0 0 1 0 19.5v-18A1.5 1.5 0 0 1 1.5 0z" fill="#1ea362"/><path d="M10.5 0v5.5H16" fill="#7fd3a6"/><path d="M3.5 9.5h9v7h-9zM3.5 11.8h9M3.5 14.2h9M7 9.5v7" fill="none" stroke="#fff" stroke-width="1.1"/></svg>
<div class="t" style="left:1623px;top:887.7px;font-size:17.5px">Google Sheets</div>
<div class="a" style="left:1392px;top:924px;width:151.5px;height:37px;border-radius:5px;border:1px solid #cfcfcf;background:#fff"></div>
<svg style="left:1409.5px;top:933.5px" width="18" height="18" viewBox="0 0 18 18" fill="none" stroke="#666" stroke-width="1.3" stroke-linecap="round" stroke-linejoin="round"><circle cx="9" cy="9" r="8"/><path d="M9 13V5.5M6 8.3l3-3 3 3"/></svg>
<div class="t" style="left:1433.5px;top:935.2px;font-size:17.5px">Upload CSV</div>
<div class="a" style="left:1554.5px;top:925px;width:169.5px;height:35px;border-radius:4px;background:#e5e5e5"></div>
<svg style="left:1571.5px;top:934.5px" width="16" height="16" viewBox="0 0 16 16" fill="none" stroke="#333" stroke-width="1.5"><path d="M8 0v16M0 8h16"/></svg>
<div class="t" style="left:1595.5px;top:935.2px;font-size:17.5px">Add other data</div>

</body></html>
